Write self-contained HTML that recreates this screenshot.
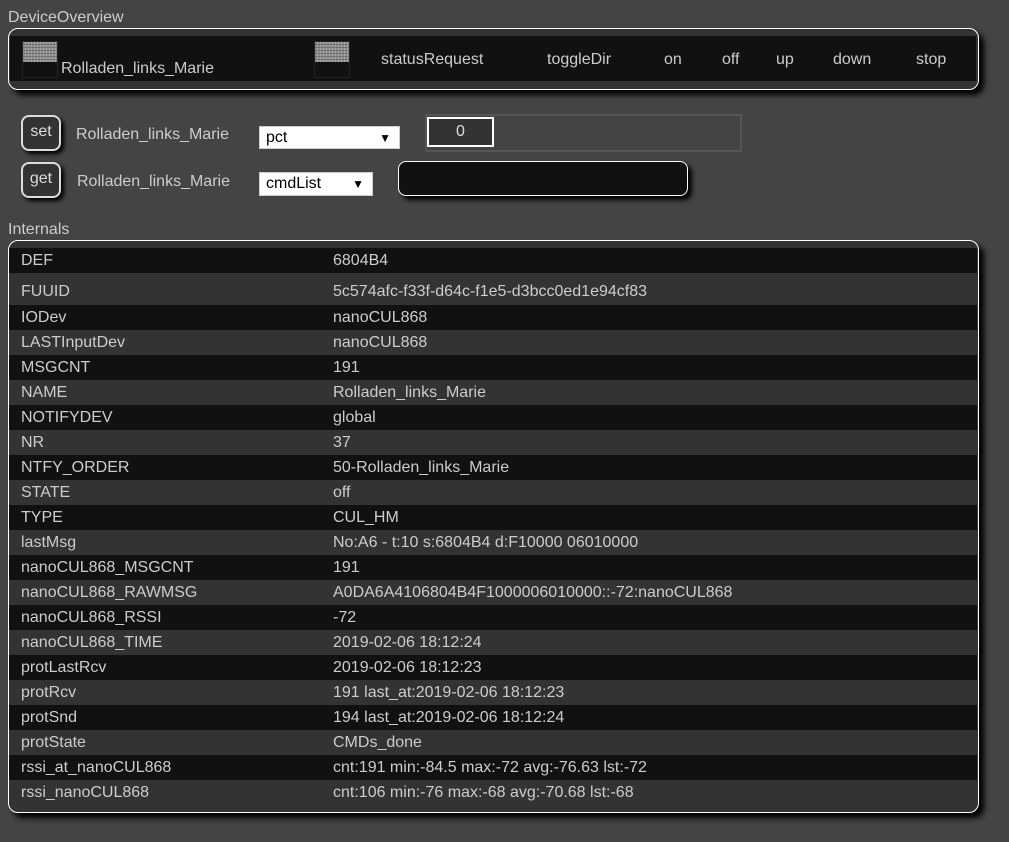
<!DOCTYPE html>
<html><head><style>
body{margin:0;background:#444;font-family:"Liberation Sans",Arial,sans-serif;font-size:16px;color:#ccc;width:1009px;height:842px;overflow:hidden;position:relative}
.a{position:absolute}
.panel{position:absolute;border:1px solid #fff;border-radius:10px;background:#333;box-shadow:5px 5px 6px #000;overflow:hidden}
.icon{position:absolute;width:34px;height:35px;background:#111;border:1px solid #222}
.icon:before{content:"";position:absolute;left:0;top:0;width:34px;height:20px;background:repeating-linear-gradient(90deg,#999 0 2px,#bbb 2px 3px),#aaa;opacity:.9}
.icon:after{content:"";position:absolute;left:0;top:0;width:34px;height:20px;background:repeating-linear-gradient(0deg,transparent 0 2px,rgba(80,80,80,.5) 2px 3px)}
.btn{position:absolute;width:36px;height:32px;border:2px solid #ddd;border-radius:8px;background:#333;color:#ddd;text-align:center;line-height:30px;font-size:16px;box-shadow:3px 3px 4px #000}
.sel{position:absolute;background:#fff;color:#000;border:1px solid #ccc;box-sizing:border-box;padding-left:6px;line-height:22px}
.sel span{position:absolute;right:8px;top:0;font-size:12px}
.row{position:absolute;left:0;width:968px;height:25px;line-height:25px}
.row .k{position:absolute;left:12px}
.row .v{position:absolute;left:324px}
.d{background:#111}.l{background:#333}
</style></head><body>
<div class="a" style="left:8px;top:9px">DeviceOverview</div>
<div class="panel" style="left:8px;top:28px;width:969px;height:60px">
 <div class="a" style="left:1px;top:7px;width:966px;height:45px;background:#111"></div>
 <div class="icon" style="left:13px;top:12px"></div>
 <div class="a" style="left:52px;top:31px">Rolladen_links_Marie</div>
 <div class="icon" style="left:305px;top:12px"></div>
 <div class="a" style="left:372px;top:22px">statusRequest</div>
 <div class="a" style="left:538px;top:22px">toggleDir</div>
 <div class="a" style="left:655px;top:22px">on</div>
 <div class="a" style="left:713px;top:22px">off</div>
 <div class="a" style="left:767px;top:22px">up</div>
 <div class="a" style="left:824px;top:22px">down</div>
 <div class="a" style="left:907px;top:22px">stop</div>
</div>

<div class="btn" style="left:21px;top:115px">set</div>
<div class="a" style="left:76px;top:126px">Rolladen_links_Marie</div>
<div class="sel" style="left:259px;top:126px;width:141px;height:23px">pct<span>▼</span></div>
<div class="a" style="left:425px;top:114px;width:313px;height:34px;border:2px solid #555"></div>
<div class="a" style="left:427px;top:117px;width:63px;height:26px;border:2px solid #fff;background:#333;color:#ddd;text-align:center;line-height:26px">0</div>

<div class="btn" style="left:21px;top:162px">get</div>
<div class="a" style="left:77px;top:173px">Rolladen_links_Marie</div>
<div class="sel" style="left:259px;top:172px;width:114px;height:24px">cmdList<span>▼</span></div>
<div class="a" style="left:398px;top:161px;width:288px;height:33px;border:1px solid #fff;border-radius:8px;background:#111;box-shadow:4px 4px 5px #000"></div>

<div class="a" style="left:8px;top:221px">Internals</div>
<div class="panel" style="left:8px;top:240px;width:969px;height:571px">
 <div class="row d" style="top:7px">
  <span class="k">DEF</span><span class="v">6804B4</span></div>
 <div class="row l" style="top:32px;height:32px;line-height:38px"><span class="k">FUUID</span><span class="v">5c574afc-f33f-d64c-f1e5-d3bcc0ed1e94cf83</span></div>
 <div class="row d" style="top:64px"><span class="k">IODev</span><span class="v">nanoCUL868</span></div>
 <div class="row l" style="top:89px"><span class="k">LASTInputDev</span><span class="v">nanoCUL868</span></div>
 <div class="row d" style="top:114px"><span class="k">MSGCNT</span><span class="v">191</span></div>
 <div class="row l" style="top:139px"><span class="k">NAME</span><span class="v">Rolladen_links_Marie</span></div>
 <div class="row d" style="top:164px"><span class="k">NOTIFYDEV</span><span class="v">global</span></div>
 <div class="row l" style="top:189px"><span class="k">NR</span><span class="v">37</span></div>
 <div class="row d" style="top:214px"><span class="k">NTFY_ORDER</span><span class="v">50-Rolladen_links_Marie</span></div>
 <div class="row l" style="top:239px"><span class="k">STATE</span><span class="v">off</span></div>
 <div class="row d" style="top:264px"><span class="k">TYPE</span><span class="v">CUL_HM</span></div>
 <div class="row l" style="top:289px"><span class="k">lastMsg</span><span class="v">No:A6 - t:10 s:6804B4 d:F10000 06010000</span></div>
 <div class="row d" style="top:314px"><span class="k">nanoCUL868_MSGCNT</span><span class="v">191</span></div>
 <div class="row l" style="top:339px"><span class="k">nanoCUL868_RAWMSG</span><span class="v">A0DA6A4106804B4F1000006010000::-72:nanoCUL868</span></div>
 <div class="row d" style="top:364px"><span class="k">nanoCUL868_RSSI</span><span class="v">-72</span></div>
 <div class="row l" style="top:389px"><span class="k">nanoCUL868_TIME</span><span class="v">2019-02-06 18:12:24</span></div>
 <div class="row d" style="top:414px"><span class="k">protLastRcv</span><span class="v">2019-02-06 18:12:23</span></div>
 <div class="row l" style="top:439px"><span class="k">protRcv</span><span class="v">191 last_at:2019-02-06 18:12:23</span></div>
 <div class="row d" style="top:464px"><span class="k">protSnd</span><span class="v">194 last_at:2019-02-06 18:12:24</span></div>
 <div class="row l" style="top:489px"><span class="k">protState</span><span class="v">CMDs_done</span></div>
 <div class="row d" style="top:514px"><span class="k">rssi_at_nanoCUL868</span><span class="v">cnt:191 min:-84.5 max:-72 avg:-76.63 lst:-72</span></div>
 <div class="row l" style="top:539px"><span class="k">rssi_nanoCUL868</span><span class="v">cnt:106 min:-76 max:-68 avg:-70.68 lst:-68</span></div>
</div>
</body></html>
